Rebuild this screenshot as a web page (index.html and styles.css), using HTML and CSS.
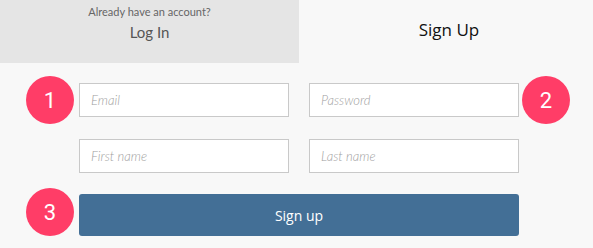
FILE: index.html
```html
<!DOCTYPE html>
<html lang="en">
<head>
  <meta charset="UTF-8" />
  <title>Sign Up</title>
  <link rel="stylesheet" href="styles.css">
</head>
<body>
  <div class="tabs">
    <div class="tab tab-login">
      <span class="tab-hint">Already have an account?</span>
      <span class="tab-title">Log In</span>
    </div>
    <div class="tab tab-signup">
      <span class="tab-title">Sign Up</span>
    </div>
  </div>

  <form class="signup-form">
    <div class="row row-first">
      <span class="step">1</span>
      <input type="text" class="field" placeholder="Email">
      <input type="password" class="field field-right" placeholder="Password">
      <span class="step step-right">2</span>
    </div>
    <div class="row row-names">
      <input type="text" class="field" placeholder="First name">
      <input type="text" class="field field-right" placeholder="Last name">
    </div>
    <div class="row row-submit">
      <span class="step">3</span>
      <button type="button" class="submit-btn">Sign up</button>
    </div>
  </form>
</body>
</html>
```

FILE: styles.css
```css
* { box-sizing: border-box; margin: 0; padding: 0; }

body {
  font-family: Lato, "Open Sans", sans-serif;
  background-color: #f8f8f8;
  color: #333;
  width: 593px;
  height: 248px;
  overflow: hidden;
}

.tabs {
  display: flex;
  height: 63px;
}

.tab {
  display: flex;
  flex-direction: column;
  align-items: center;
}

.tab-login {
  width: 299px;
  background-color: #e5e5e5;
  padding-top: 5px;
}

.tab-login .tab-hint {
  font-size: 11px;
  line-height: 14px;
  color: #666;
}

.tab-login .tab-title {
  font-size: 15px;
  line-height: 20px;
  margin-top: 3px;
  color: #555;
}

.tab-signup {
  flex: 1;
  padding: 18px 0 0 6px;
}

.tab-signup .tab-title {
  font-family: "Open Sans", sans-serif;
  font-size: 17px;
  line-height: 24px;
  color: #111;
}

.signup-form {
  padding: 13px 0 0 26px;
}

.row {
  display: flex;
  align-items: center;
}

.row-names {
  margin-top: 15px;
  padding-left: 53px;
}

.row-submit {
  margin-top: 15px;
  align-items: flex-end;
}

.step {
  width: 48px;
  height: 48px;
  border-radius: 50%;
  background-color: #ff3d67;
  color: #fff;
  font-family: Roboto, sans-serif;
  font-size: 22px;
  display: flex;
  align-items: center;
  justify-content: center;
  margin-right: 5px;
  flex-shrink: 0;
}

.step-right {
  margin-right: 0;
  margin-left: 3px;
}

.field {
  width: 210px;
  height: 34px;
  border: 1px solid #c9c9c9;
  background: #fff;
  padding: 0 11px;
  font-family: Lato, sans-serif;
  font-size: 13px;
  font-weight: 300;
  color: #333;
  outline: none;
}

.field::placeholder {
  color: #a0a0a0;
  font-style: italic;
}

.field-right {
  margin-left: 20px;
}

.submit-btn {
  width: 440px;
  height: 42px;
  background-color: #436f96;
  border: none;
  border-radius: 3px;
  color: #fff;
  font-family: "Open Sans", sans-serif;
  font-size: 14px;
  cursor: pointer;
}
```
